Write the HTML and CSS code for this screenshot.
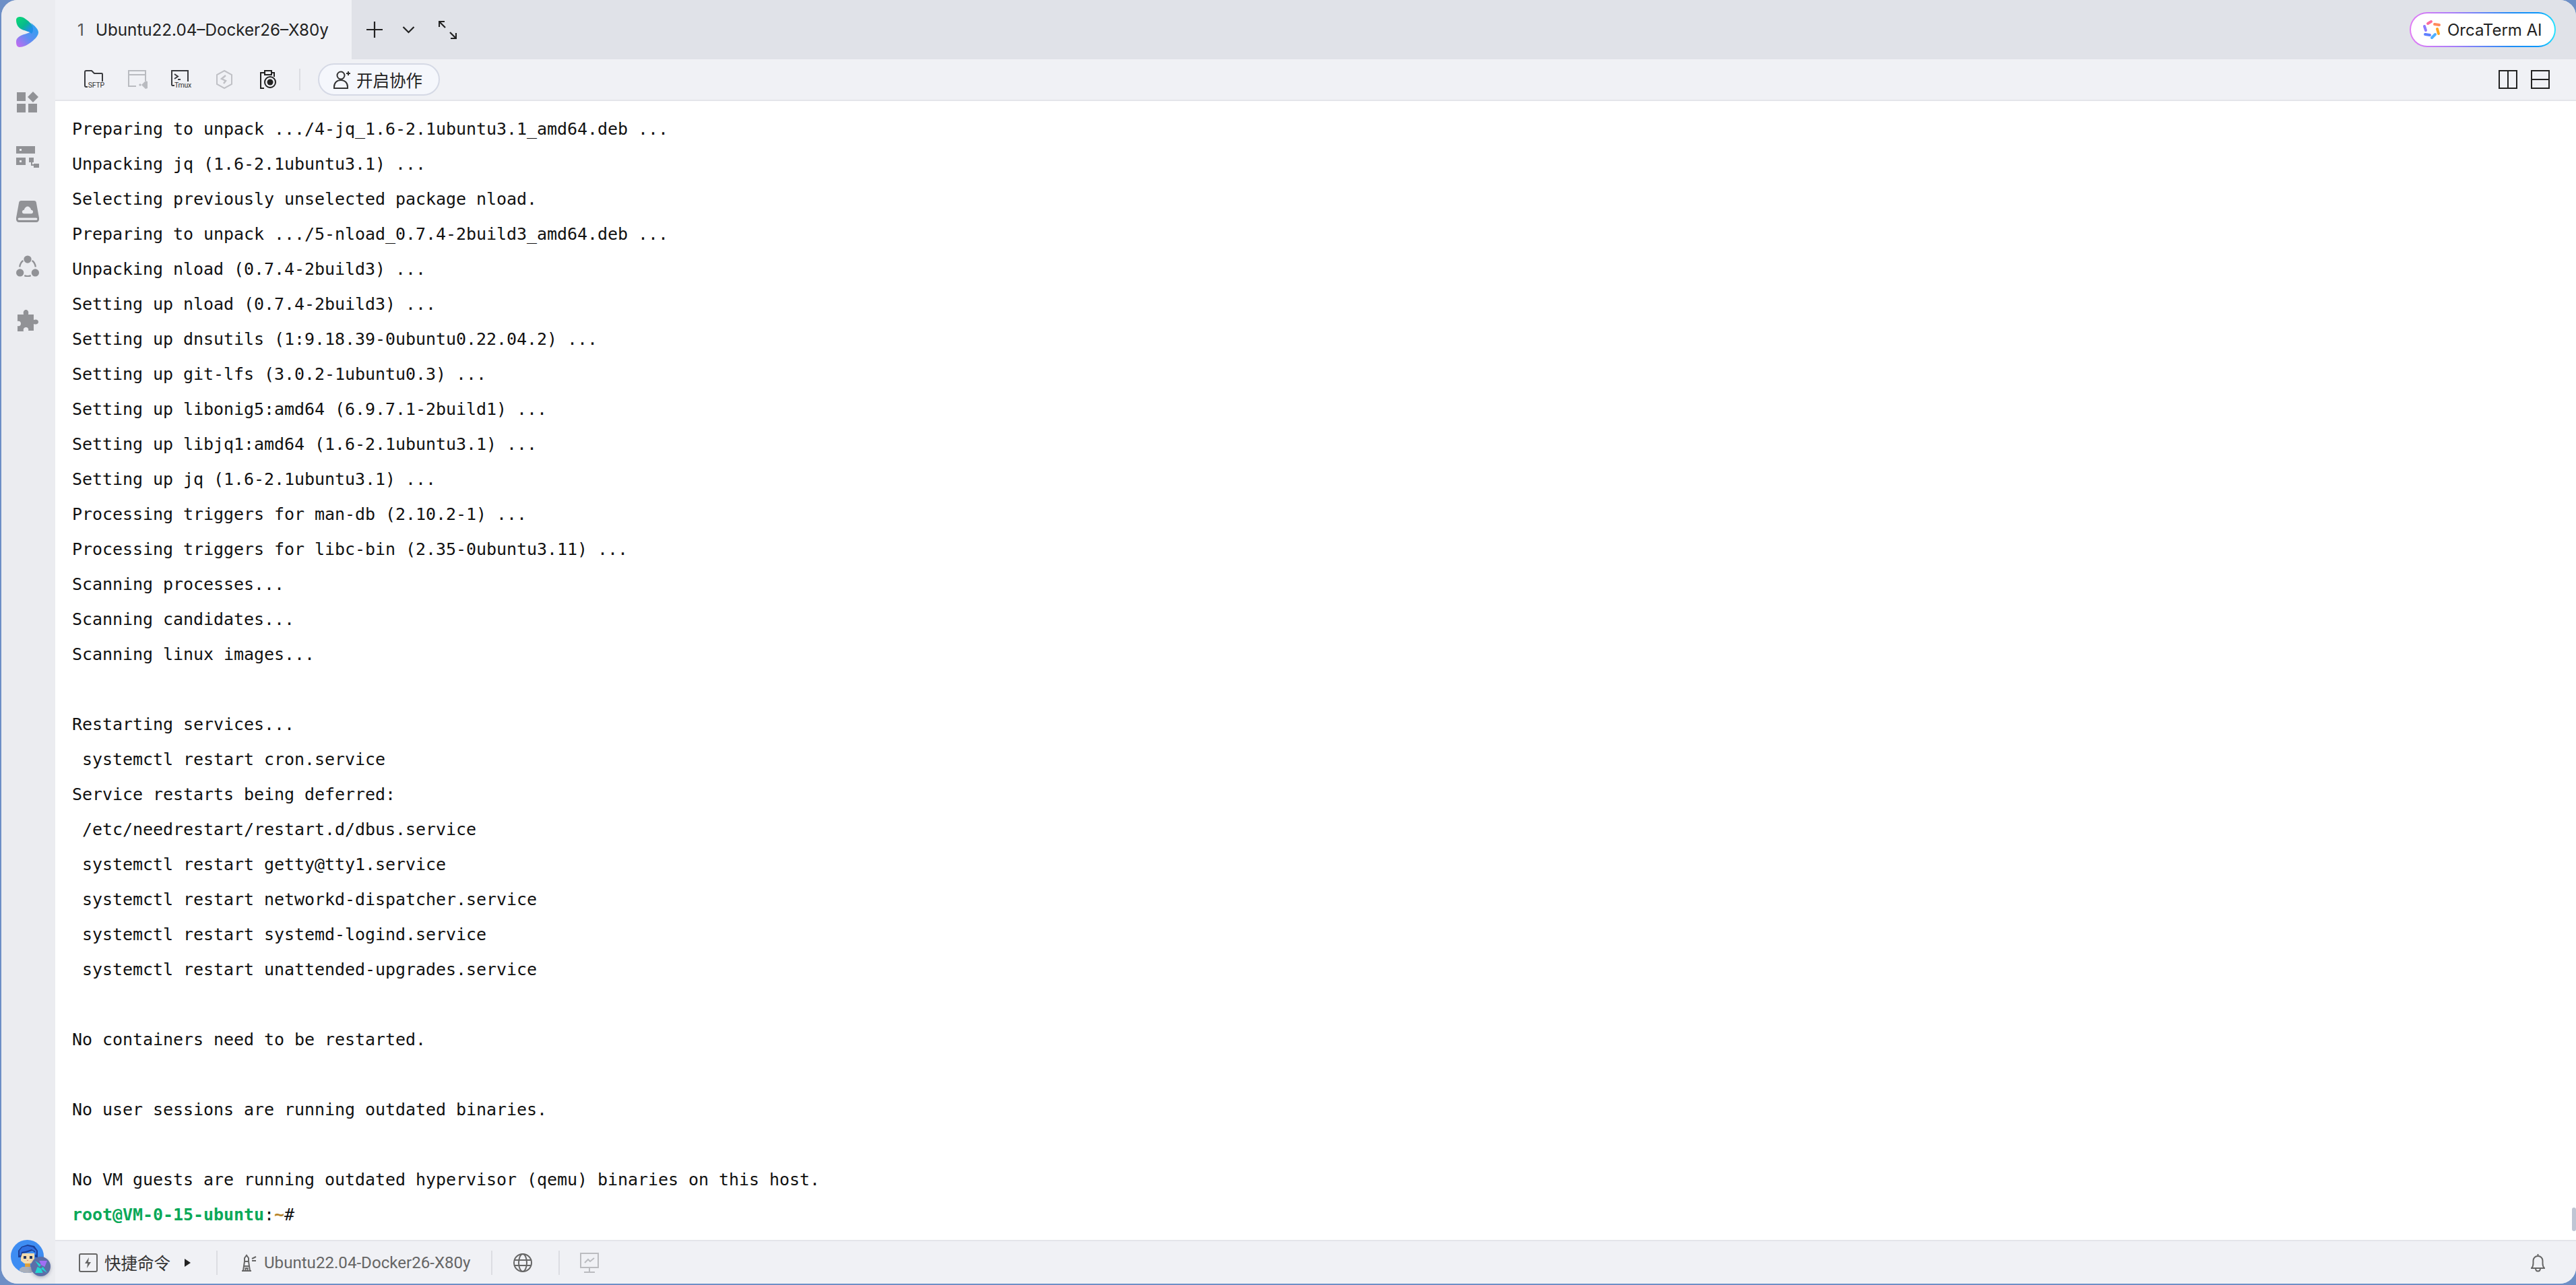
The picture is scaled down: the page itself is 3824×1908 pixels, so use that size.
FILE: index.html
```html
<!DOCTYPE html>
<html lang="zh">
<head>
<meta charset="utf-8">
<title>OrcaTerm</title>
<link rel="stylesheet" href="styles.css">
</head>
<body>
<div class="app">
  <aside class="sidebar">
    <svg class="logo" viewBox="0 0 33 45">
      <defs>
        <linearGradient id="lg1" x1="0.2" y1="0" x2="0.9" y2="0.7"><stop offset="0" stop-color="#0bd47a"/><stop offset="0.55" stop-color="#07b98e"/><stop offset="1" stop-color="#1f8fe8"/></linearGradient>
        <linearGradient id="lg2" x1="1" y1="0.1" x2="0.1" y2="1"><stop offset="0" stop-color="#28a4f0"/><stop offset="0.55" stop-color="#5f8df2"/><stop offset="1" stop-color="#c06cf0"/></linearGradient>
      </defs>
      <path fill="url(#lg2)" d="M22 9C27 13 33 18 33 23C33 28 28 33 23 37C17 42 10 45 5 45C1 45 0 41 0 37C0 32 4 29 9 27C14 25 21 24 24 20C25 17 24 12 22 9Z"/>
      <path fill="url(#lg1)" d="M0 5C0 1 3 0 6 0C11 0 17 5 22 10C26 14 26 22 23 25C20 22 14 21 9 19C4 17 0 12 0 5Z"/>
    </svg>
    <nav class="side-nav">
      <svg class="side-icon" viewBox="0 0 32 32"><path d="M0 1h13v13H0zM0 18h13v13H0zM17 18h13v13H17zM24 0l8 8-8 8-8-8z"/></svg>
      <svg class="side-icon" viewBox="0 0 34 32"><path fill-rule="evenodd" d="M0 0h28v11H0zM5 4v3h3V4zM0 17h14v11H0zM5 21v3h3v-3zM19 17h7v7h-2v3h2v-1h9v6h-9v-3h-4v-5h-3z"/></svg>
      <svg class="side-icon" viewBox="0 0 32 30"><path fill-rule="evenodd" d="M7 0h18c1.500 0 2.500.8 3 2l4 22v2c0 2-1.500 4-4 4H4c-2.500 0-4-2-4-4v-2L4 2c.5-1.200 1.500-2 3-2zM4 24c-1 0-1.500.7-1.500 1.500S3 27 4 27h24c1 0 1.500-.7 1.500-1.500S29 24 28 24zM11 18h10c3.500 0 3.500-5 0-5.200C20 9.500 17.500 8 16 8s-4 1.500-5 4.800c-3.500.2-3.500 5.200 0 5.200z"/></svg>
      <svg class="side-icon" viewBox="0 0 36 33"><circle cx="18" cy="6" r="6"/><circle cx="6" cy="27" r="6"/><circle cx="30" cy="27" r="6"/><path fill="none" stroke="#919296" stroke-width="2.500" d="M11 8C8 10 6 14 5.500 18M25 8c3 2 5 6 5.500 10M13 31.500c3 1.200 7 1.200 10 0"/></svg>
      <svg class="side-icon" viewBox="0 0 32 32"><path d="M1 7h9C9 2 11 0 13.500 0S18 2 17 7h8v8c4-1.500 7 0 7 3s-3 4.500-7 3v10h-8c1-3-1-5-3.500-5S9 28 10 32H1v-8c3 1 5-1 5-3.500S4 16 1 17z"/></svg>
    </nav>
    <div class="avatar">
      <svg class="avatar-face" viewBox="0 0 49 49">
        <defs><clipPath id="avclip"><circle cx="24.500" cy="24.500" r="24.500"/></clipPath></defs>
        <circle cx="24.500" cy="24.500" r="24.500" fill="#3e8df2"/>
        <g clip-path="url(#avclip)">
          <path fill="#a9afba" d="M13 49v-6l4-3h16l4 3v6z"/>
          <path fill="#e0a33c" d="M21 33h8v7h-8z"/>
          <path fill="#f3dcae" d="M15 20h20v11l-5 4H20l-5-4z"/>
          <path fill="#1c3f96" d="M11 26V16l5-6 9-3 10 2 5 7v10h-4v-7l-4-3-9 3-6 1-2 6z"/>
          <path fill="#2f6fe0" d="M13 23v-7l4-5 8-2 8 2 5 5v6h-2v-5l-5-3-9 3-6 1-1 5z"/>
          <path fill="#26365f" d="M19 24h4v4h-4zM28 24h4v4h-4z"/>
          <path fill="#e57a7a" d="M24 30h2v1h-2z"/>
        </g>
      </svg>
      <span class="avatar-badge">
        <svg class="badge-mark" viewBox="0 0 20 20"><path fill="#22d6d2" d="M0 20l4-10 6 3 3 7zM0 0l10 7-3 3z"/><path fill="#a06ef5" d="M20 0l-4 10-6-3-3-7z"/><path fill="#22d6d2" d="M20 20l-10-7 3-3z"/></svg>
      </span>
    </div>
  </aside>

  <main class="main">
    <header class="tabbar">
      <div class="tab"><span class="tab-num">1</span><span class="tab-title">Ubuntu22.04–Docker26–X80y</span></div>
      <div class="tab-actions">
        <svg class="ic-plus" viewBox="0 0 24 24"><path d="M12 0v24M0 12h24"/></svg>
        <svg class="ic-chev" viewBox="0 0 19 12"><path d="M1.500 2l8 8 8-8"/></svg>
        <svg class="ic-expand" viewBox="0 0 27 27"><path d="M1 9V1h8M1 1l9 9M26 18v8h-8M26 26l-9-9"/></svg>
      </div>
      <div class="ai-pill">
        <div class="ai-inner">
          <svg class="ai-logo" viewBox="0 0 28 30" fill="none" stroke-width="4" stroke-linecap="round">
            <path stroke="#fd6c9c" d="M8 6l5-3"/><path stroke="#ff8a5c" d="M18 7l7 1"/><path stroke="#ffa51f" d="M22 14l2 7"/><path stroke="#4fb0ff" d="M19 22l-5 5"/><path stroke="#5f80ff" d="M11 23l-7-1"/><path stroke="#8e7cff" d="M5 16l-2-6"/>
          </svg>
          <span class="ai-text">OrcaTerm AI</span>
        </div>
      </div>
    </header>

    <div class="toolbar">
      <div class="tool-left">
        <div class="tool tool-sftp">
          <svg class="tool-svg" viewBox="0 0 30 28"><path d="M1 23V3q0-2 2-2h8l4 4h11q1 0 1 1v11M1 23q0 2 2 2h2"/></svg>
          <span class="tool-cap">SFTP</span>
        </div>
        <div class="tool tool-vs">
          <svg class="tool-svg soft" viewBox="0 0 30 28"><path d="M12 24H1V1h25v15M1 7h25"/><path class="soft-fill" d="M16 22l2-2 2 2 6-6 3 1v10l-3 1-6-6-2 2z"/></svg>
        </div>
        <div class="tool tool-tmux">
          <svg class="tool-svg" viewBox="0 0 30 28"><path d="M1 22V1h24v16M1 22q0 1 2 1h2"/><path d="M5 6l5 3.500L5 13M10 14h4"/></svg>
          <span class="tool-cap">Tmux</span>
        </div>
        <div class="tool tool-hex">
          <svg class="tool-svg hexline" viewBox="0 0 28 28"><path d="M13 1l11 6v14l-11 6-11-6V7z"/><path d="M15 8l-6 5 6 3-3 4" stroke-width="2.500"/></svg>
        </div>
        <div class="tool tool-clip">
          <svg class="tool-svg dark" viewBox="0 0 26 28"><path d="M6 27H1V4h6M17 4h4v6M7 1h10v6H7z"/><circle cx="15" cy="18" r="8"/><circle class="dot" cx="15" cy="18" r="4.500"/></svg>
        </div>
        <span class="tool-sep"></span>
        <div class="collab"><svg class="ic-person" viewBox="0 0 25 28"><circle cx="11" cy="8" r="5.500"/><path d="M1 27v-2c0-6 4-10 10-10s10 4 10 10v2zM19 5h6M22 2v6"/></svg><span class="collab-text">开启协作</span></div>
      </div>
      <div class="tool-right">
        <svg class="ic-split" viewBox="0 0 28 28"><path d="M1 1h26v26H1zM14 1v26"/></svg>
        <svg class="ic-split" viewBox="0 0 28 28"><path d="M1 1h26v26H1zM1 14h26"/></svg>
      </div>
    </div>

    <section class="terminal">
<pre class="term-text">Preparing to unpack .../4-jq_1.6-2.1ubuntu3.1_amd64.deb ...
Unpacking jq (1.6-2.1ubuntu3.1) ...
Selecting previously unselected package nload.
Preparing to unpack .../5-nload_0.7.4-2build3_amd64.deb ...
Unpacking nload (0.7.4-2build3) ...
Setting up nload (0.7.4-2build3) ...
Setting up dnsutils (1:9.18.39-0ubuntu0.22.04.2) ...
Setting up git-lfs (3.0.2-1ubuntu0.3) ...
Setting up libonig5:amd64 (6.9.7.1-2build1) ...
Setting up libjq1:amd64 (1.6-2.1ubuntu3.1) ...
Setting up jq (1.6-2.1ubuntu3.1) ...
Processing triggers for man-db (2.10.2-1) ...
Processing triggers for libc-bin (2.35-0ubuntu3.11) ...
Scanning processes...
Scanning candidates...
Scanning linux images...

Restarting services...
 systemctl restart cron.service
Service restarts being deferred:
 /etc/needrestart/restart.d/dbus.service
 systemctl restart getty@tty1.service
 systemctl restart networkd-dispatcher.service
 systemctl restart systemd-logind.service
 systemctl restart unattended-upgrades.service

No containers need to be restarted.

No user sessions are running outdated binaries.

No VM guests are running outdated hypervisor (qemu) binaries on this host.
<span class="p-user">root@VM-0-15-ubuntu</span>:<span class="p-path">~</span>#</pre>
      <span class="scroll-thumb"></span>
    </section>

    <footer class="statusbar">
      <svg class="ic-quick" viewBox="0 0 28 28"><rect x="1" y="1" width="26" height="26" rx="2"/><path class="fill" d="M15 6l-6 9h4l-1 7 6-9h-4z"/></svg>
      <span class="quick-text">快捷命令</span>
      <span class="tri"></span>
      <span class="stat-sep sep-a"></span>
      <svg class="ic-light" viewBox="0 0 24 26"><path d="M2 25h14M4 25l2-14h6l2 14M5 11h8M6 11V6l3-4 3 4v5M5 18h8M7.500 25v-4h3v4M17 7l6-3M17 10h6"/></svg>
      <span class="host-text">Ubuntu22.04-Docker26-X80y</span>
      <span class="stat-sep sep-b"></span>
      <svg class="ic-globe" viewBox="0 0 28 28"><circle cx="14" cy="14" r="13"/><ellipse cx="14" cy="14" rx="6" ry="13"/><path d="M1 10h26M1 18h26"/></svg>
      <span class="stat-sep sep-c"></span>
      <svg class="ic-mon" viewBox="0 0 30 30"><path d="M2 1h26v21H2zM15 22v6M7 29h16M8 15l5-5 3 3 6-5"/></svg>
      <svg class="ic-bell" viewBox="0 0 21 28"><path d="M10.500 1v3M1 22c2-2 2.500-4 2.500-7V11c0-4 3-7 7-7s7 3 7 7v4c0 3 .5 5 2.500 7zM7 22c0 6 7 6 7 0"/></svg>
    </footer>
  </main>
</div>
</body>
</html>
```
FILE: styles.css
```css
* { box-sizing: border-box; }
html, body { margin: 0; height: 100%; }
body { background: #6d8fc6; overflow: hidden; }

.app {
  display: flex;
  height: 1906px;
  margin-left: 2px;
  border-radius: 24px;
  overflow: hidden;
  background: #ebecf0;
  font-family: Inter, "Noto Sans CJK SC", sans-serif;
}

.sidebar {
  width: 80px;
  flex: none;
  display: flex;
  flex-direction: column;
  align-items: flex-start;
  background: #ebecf0;
  padding: 25px 0 16px 22px;
}
.logo { width: 33px; height: 45px; display: block; }
.side-nav { display: flex; flex-direction: column; gap: 49px; margin-top: 66px; }
.side-icon { display: block; width: 34px; height: 32px; fill: #919296; }
.avatar { position: relative; margin: auto 0 0 -8px; width: 49px; height: 49px; }
.avatar-face { display: block; width: 49px; height: 49px; }
.avatar-badge {
  position: absolute; left: 30px; top: 25px;
  width: 29px; height: 29px; border-radius: 50%;
  background: #5b6ea8;
  box-shadow: 0 2px 5px rgba(60, 70, 100, 0.35);
  display: flex; align-items: center; justify-content: center;
}
.badge-mark { width: 18px; height: 18px; display: block; }

.main { flex: 1; min-width: 0; display: flex; flex-direction: column; }

.tabbar { height: 88px; flex: none; display: flex; align-items: center; background: #e0e2e8; padding-right: 30px; }
.tab { width: 440px; height: 88px; display: flex; align-items: center; background: #f0f1f5; padding-left: 33px; }
.tab-num { font-size: 24px; color: #555; width: 27px; }
.tab-title { font-size: 24.200px; color: #222; white-space: nowrap; }
.tab-actions { display: flex; align-items: center; margin-left: 22px; }
.tab-actions svg { fill: none; stroke: #222; stroke-width: 2.200; display: block; }
.ic-plus { width: 24px; height: 24px; }
.ic-chev { width: 19px; height: 12px; margin-left: 29px; }
.ic-expand { width: 27px; height: 27px; margin-left: 35px; }

.ai-pill {
  margin-left: auto; width: 217px; height: 52px; padding: 2px; border-radius: 26px;
  background: linear-gradient(90deg, #e27bf5 0%, #a97cf8 30%, #1d8df5 70%, #0a96fa 88%, #26e6ff 100%);
}
.ai-inner { height: 48px; border-radius: 24px; background: #fff; display: flex; align-items: center; padding-left: 17px; }
.ai-logo { width: 28px; height: 30px; display: block; }
.ai-text { margin-left: 9px; font-size: 24px; color: #222; white-space: nowrap; }

.toolbar {
  height: 62px; flex: none; display: flex; align-items: center; justify-content: space-between;
  background: #f0f1f5; border-bottom: 2px solid #e4e5ea; padding: 0 39px 0 43px;
}
.tool-left { display: flex; align-items: center; }
.tool { position: relative; width: 30px; height: 28px; }
.tool-vs { margin-left: 35px; }
.tool-tmux { margin-left: 34px; }
.tool-hex { margin-left: 36px; width: 28px; }
.tool-clip { margin-left: 38px; width: 26px; }
.tool-svg { display: block; width: 100%; height: 100%; fill: none; stroke: #3a3b3f; stroke-width: 2; }
.tool-svg.soft { stroke: #b9bbc0; }
.soft-fill { fill: #b9bbc0; stroke: none; }
.tool-svg.hexline { stroke: #c0c1c6; }
.tool-svg.dark { stroke: #222; }
.dot { fill: #222; stroke: none; }
.tool-cap {
  position: absolute; right: 0; top: 18px;
  font-family: Roboto, sans-serif; font-size: 10.500px; line-height: 10px; letter-spacing: -0.200px;
  color: #333; white-space: nowrap;
}
.tool-sep { width: 2px; height: 32px; background: #dcdde2; margin: 0 26px 0 32px; }
.collab {
  width: 181px; height: 48px; display: flex; align-items: center; padding-left: 21px;
  border: 2px solid #d5d9e5; border-radius: 24px; background: #f5f7fc;
}
.ic-person { width: 25px; height: 28px; fill: none; stroke: #333; stroke-width: 2; display: block; }
.collab-text { margin-left: 9px; font-size: 24.500px; color: #222; white-space: nowrap; }
.tool-right { display: flex; gap: 20px; }
.ic-split { display: block; width: 28px; height: 28px; fill: none; stroke: #222; stroke-width: 2; }

.terminal { flex: 1; min-height: 0; position: relative; background: #fff; padding: 16px 0 0 25px; }
.term-text {
  margin: 0;
  font-family: "DejaVu Sans Mono", monospace;
  font-size: 25px;
  letter-spacing: -0.050px;
  line-height: 52px;
  color: #111;
}
.p-user { color: #0aa858; font-weight: 700; }
.p-path { color: #b8862b; font-weight: 700; }
.scroll-thumb { position: absolute; right: 0; top: 1643px; width: 6px; height: 35px; border-radius: 3px; background: #bfc5d4; }

.statusbar {
  height: 65px; flex: none; display: flex; align-items: center;
  background: #f0f1f5; border-top: 2px solid #e4e5ea;
  padding: 0 46px 0 35px;
  font-size: 24px;
}
.statusbar svg { display: block; fill: none; stroke: #666; stroke-width: 2; }
.ic-quick { width: 28px; height: 28px; }
.statusbar svg .fill { fill: #666; stroke: none; }
.quick-text { margin-left: 10px; font-size: 24.500px; color: #333; white-space: nowrap; }
.tri { width: 0; height: 0; margin-left: 21px; border-left: 9px solid #222; border-top: 6px solid transparent; border-bottom: 6px solid transparent; }
.stat-sep { width: 2px; height: 36px; background: #dcdde2; }
.sep-a { margin-left: 38px; }
.ic-light { width: 24px; height: 26px; margin-left: 34px; }
.host-text { margin-left: 11px; color: #666; font-family: Roboto, sans-serif; font-size: 24.100px; white-space: nowrap; }
.sep-b { margin-left: 30px; }
.ic-globe { width: 28px; height: 28px; margin-left: 31px; }
.sep-c { margin-left: 39px; }
.statusbar .ic-mon { width: 30px; height: 30px; margin-left: 29px; stroke: #bbbcc0; }
.ic-bell { width: 21px; height: 28px; margin-left: auto; }
```
